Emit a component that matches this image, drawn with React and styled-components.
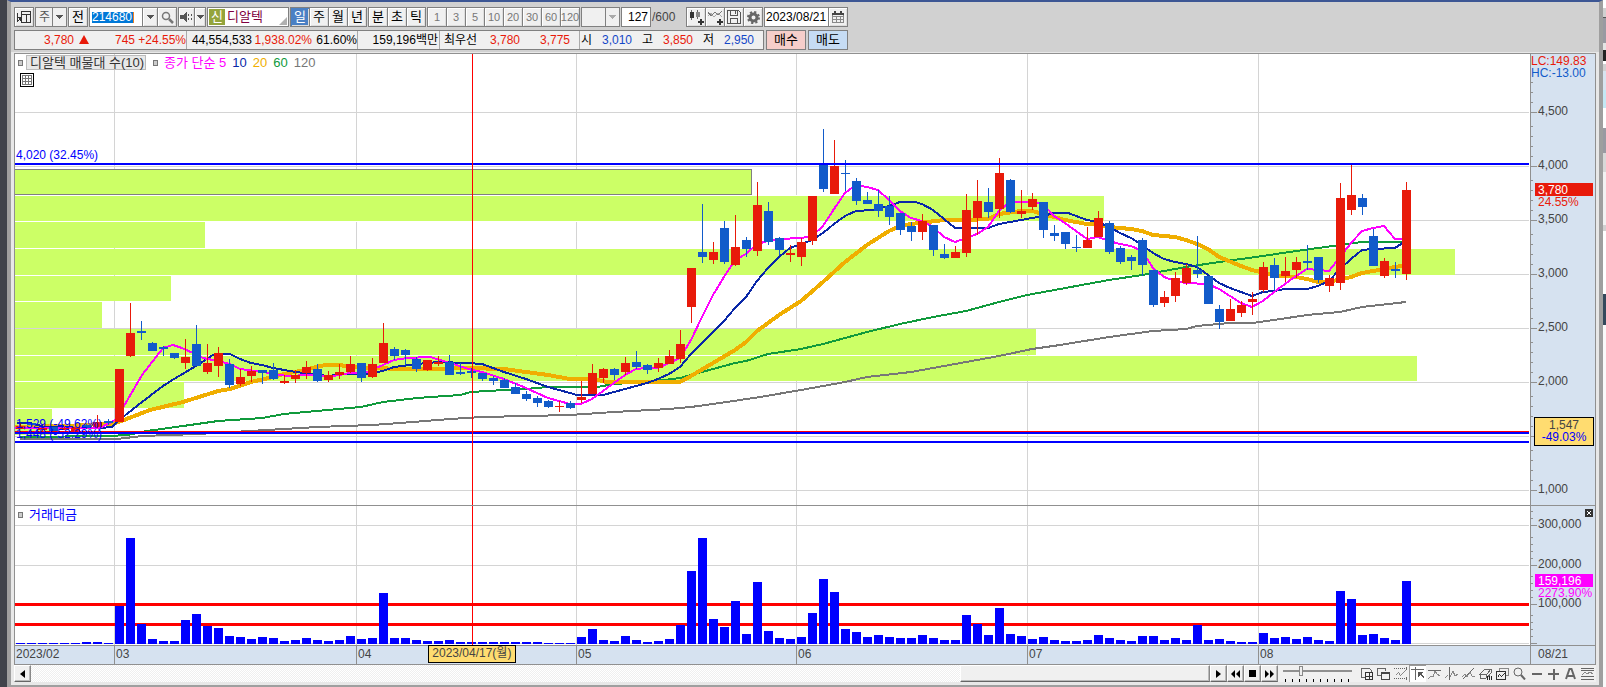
import React, { useState } from "react";
import styled, { createGlobalStyle, css } from "styled-components";

const RED = "#e81a0a";
const BLUE = "#125bca";
const LINE = "#808080";
const GRID = "#d4d4d4";
const AXIS_BG = "#d6e2f0";
const FONT = '"Liberation Sans", "Noto Sans CJK KR", sans-serif';

const GlobalStyle = createGlobalStyle`
  * {
    box-sizing: border-box;
  }
  body {
    margin: 0;
    font-family: ${FONT};
    font-size: 12px;
    line-height: 14px;
    color: #000;
  }
  button, input, select {
    font: inherit;
    color: inherit;
    margin: 0;
    padding: 0;
    border: 0;
    border-radius: 0;
    background: none;
    min-width: 0;
  }
`;

// ---------- data ----------

// [up/down, body top, body bottom, high, low], one per trading day
const candles = [
  ["u", 426, 429, 423, 429], ["d", 423, 425, 423, 426], ["u", 428, 430, 427, 431], ["d", 427, 432, 427, 433],
  ["u", 428, 430, 426, 430], ["u", 427, 431, 426, 431], ["d", 425, 428, 424, 429], ["u", 422, 427, 415, 428],
  ["d", 421, 423, 419, 425], ["u", 369, 422, 369, 422], ["u", 333, 356, 303, 357], ["d", 331, 333, 321, 340],
  ["d", 343, 351, 342, 351], ["d", 347, 349, 346, 356], ["d", 353, 358, 353, 359], ["u", 357, 363, 339, 369],
  ["d", 344, 366, 325, 366], ["u", 363, 372, 344, 374], ["u", 353, 366, 347, 377], ["d", 364, 385, 359, 388],
  ["u", 377, 384, 369, 386], ["u", 371, 376, 366, 382], ["d", 370, 373, 370, 384], ["d", 370, 379, 363, 380],
  ["u", 381, 383, 375, 384], ["u", 375, 379, 370, 383], ["u", 367, 373, 361, 379], ["d", 369, 381, 364, 382],
  ["u", 375, 380, 371, 382], ["u", 372, 375, 364, 379], ["u", 364, 372, 356, 373], ["d", 363, 378, 363, 382],
  ["u", 364, 377, 358, 378], ["u", 343, 363, 323, 363], ["d", 349, 356, 347, 360], ["d", 350, 355, 349, 365],
  ["d", 359, 369, 357, 372], ["u", 360, 370, 360, 371], ["u", 362, 364, 356, 366], ["d", 362, 375, 355, 375],
  ["d", 372, 374, 363, 375], ["d", 371, 373, 368, 378], ["d", 373, 379, 373, 381], ["d", 378, 381, 376, 385],
  ["d", 380, 388, 378, 388], ["d", 387, 394, 383, 394], ["d", 394, 399, 391, 401], ["d", 398, 403, 396, 407],
  ["d", 401, 407, 400, 408], ["u", 406, 407, 401, 412], ["d", 403, 408, 401, 409], ["u", 397, 400, 381, 403],
  ["u", 373, 394, 364, 394], ["u", 369, 378, 368, 383], ["d", 369, 375, 368, 380], ["u", 363, 372, 357, 375],
  ["d", 362, 367, 351, 369], ["d", 365, 370, 364, 374], ["u", 363, 368, 358, 372], ["u", 356, 364, 350, 364],
  ["u", 344, 359, 330, 363], ["u", 268, 307, 268, 323], ["d", 252, 257, 204, 263], ["u", 252, 260, 242, 264],
  ["d", 228, 262, 221, 264], ["u", 247, 265, 215, 266], ["d", 240, 249, 237, 257], ["u", 205, 251, 182, 256],
  ["d", 211, 242, 202, 245], ["d", 238, 250, 237, 255], ["u", 253, 255, 245, 262], ["u", 242, 257, 238, 266],
  ["u", 196, 241, 196, 245], ["d", 164, 189, 129, 192], ["u", 166, 194, 140, 194], ["d", 173, 174, 160, 191],
  ["d", 181, 201, 178, 205], ["d", 200, 204, 192, 204], ["d", 204, 211, 190, 217], ["d", 206, 217, 196, 225],
  ["d", 213, 230, 213, 235], ["d", 226, 232, 222, 241], ["u", 221, 232, 214, 240], ["d", 225, 250, 225, 256],
  ["d", 254, 258, 244, 259], ["u", 252, 258, 246, 258], ["u", 210, 253, 194, 257], ["u", 201, 218, 180, 235],
  ["d", 202, 212, 188, 218], ["u", 173, 209, 158, 218], ["d", 180, 212, 179, 213], ["u", 211, 214, 190, 218],
  ["u", 199, 207, 193, 210], ["d", 202, 230, 202, 238], ["d", 233, 236, 225, 241], ["d", 232, 244, 232, 249],
  ["d", 247, 248, 235, 252], ["u", 240, 248, 227, 248], ["u", 218, 237, 211, 237], ["d", 223, 252, 221, 254],
  ["d", 248, 262, 246, 264], ["d", 257, 261, 255, 270], ["d", 240, 265, 238, 276], ["d", 270, 305, 270, 307],
  ["u", 297, 303, 291, 307], ["u", 278, 296, 272, 302], ["u", 268, 283, 264, 285], ["d", 270, 274, 236, 278],
  ["d", 276, 304, 276, 304], ["d", 309, 322, 305, 329], ["u", 309, 321, 299, 321], ["u", 305, 313, 301, 317],
  ["u", 299, 302, 292, 315], ["u", 267, 290, 262, 292], ["d", 265, 278, 258, 291], ["u", 271, 276, 257, 282],
  ["u", 262, 270, 257, 278], ["d", 261, 263, 245, 270], ["d", 257, 280, 257, 283], ["u", 278, 286, 275, 292],
  ["u", 198, 283, 183, 290], ["u", 195, 210, 164, 215], ["d", 198, 207, 194, 215], ["d", 236, 266, 229, 266],
  ["u", 261, 276, 258, 278], ["d", 269, 271, 262, 278], ["u", 190, 274, 182, 280],
];

const volumes = [
  1, 1, 1, 1, 1, 1, 2, 2, 1, 38, 106, 20, 5, 3, 3, 24, 30, 18, 16, 8, 7, 5, 7, 6, 3, 4, 6, 4, 3, 4, 8, 5, 6, 51, 6, 6,
  4, 3, 3, 4, 2, 2, 2, 2, 2, 2, 2, 2, 1, 1, 1, 7, 15, 4, 3, 8, 4, 2, 3, 5, 19, 73, 106, 25, 17, 43, 10, 62, 13, 6, 5,
  7, 31, 65, 52, 15, 12, 7, 9, 7, 6, 6, 9, 6, 4, 4, 29, 20, 9, 36, 10, 8, 5, 7, 4, 3, 3, 4, 9, 6, 4, 3, 8, 8, 4, 6, 4,
  19, 4, 5, 3, 2, 2, 11, 6, 7, 5, 7, 4, 3, 53, 45, 9, 10, 6, 4, 63,
];

const averages = [
  {
    color: "#777",
    width: 2,
    points:
      "20,439 117,439 142,436 197,434 250,431 284,429 317,427 372,425 400,423 450,419 482,417 570,415 614,412 669,409 691,407 720,403 760,397 801,390 845,382 867,377 911,372 944,366 999,356 1032,349 1060,345 1109,337 1153,331 1186,329 1197,326 1230,323 1252,323 1274,320 1307,315 1340,312 1362,307 1406,302",
  },
  {
    color: "#109a3c",
    width: 2,
    points:
      "20,437 110,436 127,435 147,431 183,426 218,421 262,418 284,414 317,411 361,407 383,402 417,398 460,395 471,392 504,390 526,389 548,387 597,387 614,384 647,382 680,378 702,372 735,363 746,361 768,354 801,349 823,344 867,332 900,324 933,317 966,311 999,302 1027,295 1060,289 1109,280 1142,275 1186,267 1219,262 1263,256 1296,251 1318,248 1340,245 1362,242 1406,242",
  },
  {
    color: "#f0ae00",
    width: 4,
    points:
      "15,427 67,426 100,424 113,424 124,420 150,410 183,402 218,391 230,389 251,382 273,377 284,374 300,371 325,365 339,365 353,367 400,369 433,369 467,368 504,369 526,372 548,375 570,379 593,379 607,382 680,382 691,376 713,363 735,350 746,342 757,331 779,315 801,301 823,282 845,262 867,245 889,231 900,226 911,224 944,220 966,220 988,219 999,214 1021,211 1032,211 1043,214 1065,220 1087,224 1098,224 1109,227 1131,229 1142,231 1153,235 1175,237 1186,240 1197,244 1208,249 1219,257 1241,266 1252,270 1273,275 1296,277 1307,279 1318,282 1333,281 1351,277 1362,273 1384,269 1406,265",
  },
  {
    color: "#0a28a8",
    width: 2,
    points:
      "17,423 30,423 45,427 100,428 112,427 123,417 142,402 163,386 174,379 196,366 213,355 223,354 230,354 240,359 251,363 262,365 273,368 290,371 310,374 328,376 343,374 367,374 383,371 394,367 417,364 438,362 467,363 482,364 504,372 526,379 548,387 570,393 577,395 603,395 614,392 625,389 636,386 647,383 658,379 669,374 680,367 691,354 702,343 713,332 724,321 735,308 746,297 757,281 768,268 779,257 790,248 801,244 812,240 823,233 834,224 845,216 856,211 873,210 889,206 900,202 915,202 922,204 933,210 944,219 955,228 988,228 999,224 1010,222 1032,218 1043,216 1054,213 1068,213 1087,220 1098,222 1109,227 1120,233 1131,238 1142,245 1153,253 1164,259 1175,262 1186,264 1197,267 1208,275 1219,283 1230,288 1241,292 1252,296 1263,292 1274,291 1285,289 1307,289 1318,286 1329,281 1340,269 1351,259 1362,250 1373,249 1395,248 1404,242",
  },
  {
    color: "#ff00ff",
    width: 2,
    points:
      "15,428 100,428 115,420 124,406 142,375 163,348 173,345 182,348 193,353 203,358 213,360 230,364 240,369 263,372 287,376 310,375 333,376 350,373 367,372 383,365 394,360 407,358 430,357 450,363 472,370 482,372 504,379 526,388 548,398 570,404 581,404 592,399 603,391 614,383 625,375 636,369 647,368 658,368 669,363 680,358 691,340 702,317 713,295 724,277 735,260 746,254 757,244 768,241 779,239 801,238 812,236 823,226 834,209 845,193 856,185 867,187 878,190 889,200 900,211 911,218 922,221 933,227 944,237 955,242 966,238 977,234 988,227 999,211 1010,202 1032,202 1043,204 1054,216 1065,223 1076,231 1087,239 1098,237 1109,241 1120,244 1131,246 1142,251 1153,268 1164,277 1175,281 1186,283 1208,284 1219,289 1230,296 1241,303 1252,307 1263,301 1274,292 1285,284 1296,276 1307,269 1318,270 1329,271 1340,257 1351,243 1362,231 1373,228 1384,226 1395,239 1406,239",
  },
];

// volume-at-price bands: [top, bottom, right edge]
const bands = [
  [196, 221, 1104], [222, 248, 205], [249, 275, 1455], [276, 301, 171], [302, 328, 102],
  [329, 355, 1036], [356, 381, 1417], [382, 408, 184], [409, 435, 52],
];

const months = [
  { label: "2023/02", size: 99 },
  { label: "03", size: 242 },
  { label: "04", size: 220 },
  { label: "05", size: 220 },
  { label: "06", size: 231 },
  { label: "07", size: 231 },
  { label: "08", size: 272 },
];
const monthLines = [114, 356, 576, 796, 1027, 1258];

const priceTicks = [
  [112, "4,500"], [166, "4,000"], [220, "3,500"], [274, "3,000"],
  [328, "2,500"], [382, "2,000"], [436, ""], [490, "1,000"],
];
const volumeTicks = [[525, "300,000"], [565, "200,000"], [604, "100,000"], [643, ""]];

const barX = (i) => 16 + i * 11;

// ---------- frame ----------

const Desktop = styled.div`
  display: flex;
  min-height: 100vh;
  background: #40434b;
  padding-left: 7px;
`;

const Neighbour = styled.div`
  width: 3px;
  background: linear-gradient(
    #fff 8px, #d0d0d0 8px 17px, #555 17px 18px, #9a9aa2 18px 43px, #e4e4e4 43px 50px, #222 50px 61px, #fff 61px 64px,
    #d0d0d0 64px 71px, #d8e4f0 71px 90px, #c4e8f4 90px 108px, #fff 108px 128px, #9a9aa2 128px 153px,
    #d8d8d8 153px 172px, #f2f2f2 172px 225px, #d0d0d0 225px 231px, #fff 231px 294px, #34495c 294px 325px, #fafafa 325px
  );
`;

const Window = styled.main`
  flex: 1;
  min-width: 0;
  display: flex;
  flex-direction: column;
  border: 4px solid #9f9f9f;
  border-top: 2px solid #3c5694;
  border-bottom-width: 3px;
  background: #e8e8e8;
`;

const Header = styled.header`
  display: flex;
  flex-direction: column;
  gap: 3px;
  height: 50px;
  padding: 5px 3px 0;
  margin-bottom: 1px;
  background: #d1d1d1;
  white-space: nowrap;
`;

// ---------- toolbar ----------

const Toolbar = styled.div`
  display: flex;
  gap: 1px;
  height: 20px;
`;

const Group = styled.div`
  position: relative;
  display: flex;
  flex: none;
  width: ${(p) => p.$width}px;
  border: 1px solid ${LINE};
  background: ${(p) => (p.$white ? "#fff" : "#f0f0f0")};
  > * + * {
    border-left: 1px solid ${LINE};
  }
`;

const ToolButton = styled.button`
  flex: ${(p) => (p.$width ? `0 0 ${p.$width}px` : 1)};
  display: flex;
  align-items: center;
  justify-content: center;
  background: ${(p) => (p.$active ? "#4a80c4" : "#f0f0f0")};
  color: ${(p) => (p.$active ? "#fff" : "#000")};
  box-shadow: inset 1px 1px ${(p) => (p.$active ? "#4a80c4" : "#fff")}, inset -1px -1px #ddd;
  font-size: ${(p) => (p.$small ? 11 : 13)}px;
  &:disabled {
    color: #777;
  }
`;

const Field = styled.input`
  flex: 1;
  padding: 0 2px;
  background: #fff;
  outline: none;
  text-align: ${(p) => p.$align || "left"};
`;

const DateField = styled(Field)`
  padding: 0 1px;
`;

const CodeField = styled(Field)`
  color: #fff;
  background: linear-gradient(#f08020, #f08020) 43px 4px / 1px 11px no-repeat,
    linear-gradient(#0078d7, #0078d7) 2px 4px / 41px 11px no-repeat, #fff;
`;

const Picker = styled.select`
  flex: 1;
  appearance: none;
  outline: none;
  padding-left: 3px;
  color: #555;
`;

const Arrow = styled.span`
  position: absolute;
  top: 0;
  right: 0;
  bottom: 0;
  width: ${(p) => p.$width}px;
  display: flex;
  align-items: center;
  justify-content: center;
  border-left: 1px solid ${LINE};
  pointer-events: none;
`;

const NameBox = styled(Group)`
  align-items: center;
  gap: 2px;
  padding-left: 1px;
  color: #800040;
  font-size: 13px;
  > * + * {
    border: 0;
  }
  &::after {
    content: "";
    position: absolute;
    right: 1px;
    bottom: 1px;
    border: 4px solid #b0b0b0;
    border-top-color: transparent;
    border-left-color: transparent;
  }
`;

const NewBadge = styled.span`
  width: 16px;
  height: 16px;
  line-height: 16px;
  text-align: center;
  background: #94a43c;
  color: #fff;
`;

const CountLabel = styled.label`
  width: 33px;
  line-height: 20px;
  color: #444;
`;

// ---------- quote row ----------

const QuoteRow = styled.div`
  display: flex;
  gap: 2px;
  height: 20px;
`;

const Quotes = styled.div`
  display: flex;
  width: 750px;
  border: 1px solid ${LINE};
  background: #f0f0f0;
`;

const QuoteCell = styled.div`
  display: flex;
  width: ${(p) => p.$width}px;
  line-height: 18px;
  & + & {
    border-left: 1px solid #aaa;
  }
`;

const tones = { up: "#e81a0a", down: "#1448c8", flat: "#000" };

const Value = styled.span`
  width: ${(p) => p.$width}px;
  text-align: right;
  color: ${(p) => tones[p.$tone || "flat"]};
`;

const OrderButton = styled.button`
  width: 40px;
  border: 1px solid ${LINE};
  background: ${(p) => (p.$buy ? "#f6ceca" : "#c6dcf4")};
  font-size: 13px;
`;

// ---------- chart ----------

const Frame = styled.section`
  flex: 1;
  display: flex;
  flex-direction: column;
  margin: 0 3px;
  border: 1px solid #909090;
  background: #fff;
`;

const Pane = styled.div`
  display: flex;
  height: ${(p) => p.$height}px;
  & + & {
    border-top: 1px solid #909090;
  }
`;

const Plot = styled.div`
  position: relative;
  flex: 1;
  min-width: 0;
  > svg {
    display: block;
    width: 100%;
    height: 100%;
    shape-rendering: crispEdges;
  }
`;

const Scale = styled.div`
  position: relative;
  width: 65px;
  border-left: 1px solid #909090;
  background: ${AXIS_BG};
  svg {
    display: block;
  }
`;

const ScaleText = styled.text`
  font-family: ${FONT};
  font-size: 12px;
  fill: ${(p) => p.$color || "#444"};
`;

const Legend = styled.div`
  position: absolute;
  top: 1px;
  left: 3px;
  display: flex;
  align-items: center;
  height: 15px;
  font-size: 13px;
  white-space: nowrap;
`;

const Marker = styled.i`
  width: 5px;
  height: 6px;
  border: 1px solid #777;
  background: #ccc;
`;

const LegendTitle = styled.span`
  margin: 0 7px 0 3px;
  padding: 0 2px 0 3px;
  width: 120px;
  border: 1px solid #bbb;
  background: #e8e8e8;
  color: #333;
  line-height: 13px;
`;

const LegendItem = styled.span`
  margin-left: ${(p) => p.$gap || 6}px;
  color: ${(p) => p.$color};
`;

const TableButton = styled.button`
  position: absolute;
  top: 19px;
  left: 5px;
  width: 14px;
  height: 14px;
`;

const LineLabel = styled.span`
  position: absolute;
  left: 1px;
  color: #0000ff;
  white-space: nowrap;
`;

const CloseButton = styled.button`
  position: absolute;
  top: 3px;
  right: 2px;
  width: 8px;
  height: 8px;
  background: #333;
  svg {
    display: block;
  }
`;

const TimeAxis = styled.div`
  display: flex;
  height: 19px;
  border-top: 1px solid #909090;
  background: ${AXIS_BG};
  color: #444;
  line-height: 16px;
`;

const Months = styled.div`
  position: relative;
  flex: 1;
  display: grid;
  grid-template-columns: ${months.map((m) => `${m.size}fr`).join(" ")};
`;

const Month = styled.span`
  padding-left: 1px;
  & + & {
    border-left: 1px solid #909090;
  }
`;

const CursorDate = styled.span`
  position: absolute;
  top: -1px;
  left: 27.25%;
  width: 88px;
  height: 18px;
  border: 1px solid #000;
  background: #ffdc70;
  text-align: center;
  line-height: 15px;
`;

const LastDate = styled.span`
  width: 65px;
  padding-left: 7px;
  border-left: 1px solid #909090;
`;

// ---------- bottom bar ----------

const BottomBar = styled.footer`
  display: flex;
  height: 17px;
  margin: 0 3px 3px;
  background: #f0f0f0;
`;

const raised = css`
  background: #f0f0f0;
  border: 1px solid #fff;
  border-right-color: #888;
  border-bottom-color: #666;
  box-shadow: inset -1px -1px #bbb;
`;

const StepButton = styled.button`
  ${raised}
  flex: none;
  width: 17px;
  display: flex;
  align-items: center;
  justify-content: center;
`;

const Track = styled.div`
  flex: 1;
  display: flex;
  justify-content: flex-end;
  background: repeating-conic-gradient(#efefef 0 25%, #fff 0 50%) 0 0 / 2px 2px;
`;

const Thumb = styled.div`
  ${raised}
  width: 21.2%;
`;

const SpeedBox = styled.label`
  flex: none;
  display: flex;
  flex-direction: column;
  justify-content: space-between;
  width: 70px;
  margin: 0 5px;
`;

const Speed = styled.input`
  appearance: none;
  width: 69px;
  height: 11px;
  &::-webkit-slider-runnable-track {
    height: 2px;
    background: #909090;
  }
  &::-webkit-slider-thumb {
    appearance: none;
    width: 4px;
    height: 10px;
    margin-top: -4px;
    border: 1px solid #888;
    background: #eee;
  }
`;

const SpeedTicks = styled.span`
  height: 3px;
  margin: 0 1px;
  background: repeating-linear-gradient(90deg, transparent 0 1px, #000 1px 2px, transparent 2px 7px);
`;

const Tools = styled.div`
  flex: none;
  display: flex;
`;

const ToolIcon = styled.button`
  width: 17px;
  display: flex;
  align-items: center;
  justify-content: center;
  background: ${(p) => (p.$active ? "#fff" : "none")};
  box-shadow: ${(p) => (p.$active ? "inset 1px 1px #999" : "none")};
`;

// ---------- icons ----------

function Glyph({ size = 13, box = 13, color = "#555", smooth, children }) {
  return (
    <svg
      width={size}
      height={size}
      viewBox={`0 0 ${box} ${box}`}
      fill="none"
      stroke={color}
      shapeRendering={smooth ? "auto" : "crispEdges"}
      aria-hidden="true"
    >
      {children}
    </svg>
  );
}

function Down({ color = "#555" }) {
  return (
    <svg width="7" height="4" shapeRendering="crispEdges" aria-hidden="true">
      <path d="M0 0h7L3.500 4z" fill={color} />
    </svg>
  );
}

const tools = [
  ["격자 추가", <><path d="M11.500 5V3.500l-2-2h-8v9H5" /><path d="M5.500 5.500h7v7h-7zM9 5.500v7M5.500 9h7" stroke="#333" /></>],
  ["겹치기", <><path d="M4 8.500H.500v-7h8V4" /><path d="M4.500 5.500h8v7h-8zM4.500 6.500h8" stroke="#444" /></>],
  ["영역", <><path d="M0 1.500h13M0 11.500h13" strokeDasharray="1 1" /><path d="M1.500 8.500l3-3 2 3 5-5" stroke="#888" /><path d="M12.500 0v3M12.500 10v3" /></>],
  ["커서", <><path d="M0 2.500h13M4.500 0v13" /><path d="M7 5h5l-2 2 3 3-1 1-3-3-2 2z" fill="#555" stroke="none" /></>, true],
  ["수평선", <><path d="M0 3.500h13" /><path d="M0 12l3-3 2 1 2-6 2 3 3 2" stroke="#888" /></>],
  ["수직선", <><path d="M4.500 0v13" /><path d="M0 11l3-3M5 10l3-6 2 5 3-2" stroke="#888" /></>],
  ["추세선", <><path d="M1 12L12 1" /><path d="M0 10l3-3 2 3 3-5 2 4 3 1" stroke="#888" /></>],
  ["지우개", <><path d="M1 7l5-5h6L8 7zM1 7v4h6l1-4M8 11l4-5V2" /><path d="M8.500 9v4M10.500 9v4M12.500 9v4" stroke="#222" /></>],
  ["화면 복사", <><path d="M3.500 4V1.500h9v7H10" stroke="#888" /><path d="M.500 4.500h9v8h-9zM1.500 10.500l2-3 2 2 3-3" stroke="#333" /></>],
  ["찾기", <><circle cx="5" cy="5" r="4" /><path d="M8 8l4 4.500" strokeWidth="2" /></>],
  ["축소", <path d="M1.500 7h10" strokeWidth="2" />],
  ["확대", <path d="M1 7h11M6.500 1.500v11" strokeWidth="2" />],
  ["글자", <path d="M2 12L5.500 2h2L11 12M3.500 9h6" strokeWidth="2" />],
  ["목록", <><path d="M0 1.500h13M0 3.500h13M0 9.500h13M0 12h13" /><path d="M1 8l3-3 2 2 3-2 3 2" stroke="#888" /></>],
];

// ---------- parts ----------

function TopToolbar() {
  const [period, setPeriod] = useState("일");

  return (
    <Toolbar>
      <Group $width={20}>
        <ToolButton aria-label="화면 열기">
          <Glyph size={14} box={14}>
            <path d="M4.500 1.500h9v11h-9zM4.500 4.500h9M9.500 4v8" stroke="#333" />
            <path d="M0 3v9M0 12l4-4M1 7h3v4z" stroke="#333" fill="#333" />
          </Glyph>
        </ToolButton>
      </Group>
      <Group $width={32}>
        <Picker aria-label="종목 구분">
          <option>주</option>
        </Picker>
        <Arrow $width={14}><Down /></Arrow>
      </Group>
      <Group $width={20}>
        <ToolButton>전</ToolButton>
      </Group>
      <Group $width={88}>
        <CodeField aria-label="종목코드" defaultValue="214680" />
        <ToolButton $width={15} aria-label="코드 목록"><Down /></ToolButton>
        <ToolButton $width={19} aria-label="종목 찾기">
          <Glyph color="#777" smooth>
            <circle cx="5" cy="5" r="3.500" strokeWidth="1.500" />
            <path d="M8 8l4 4" strokeWidth="2.500" />
          </Glyph>
        </ToolButton>
      </Group>
      <Group $width={28}>
        <ToolButton aria-label="소리">
          <Glyph>
            <path d="M0 4h3l4-4v12L3 8H0z" fill="#555" stroke="none" />
            <path d="M8.500 3v6M11.500 3v6" strokeDasharray="2 2" />
          </Glyph>
        </ToolButton>
        <ToolButton $width={11} aria-label="소리 설정"><Down /></ToolButton>
      </Group>
      <NameBox $width={82} $white>
        <NewBadge>신</NewBadge>
        <span>디알텍</span>
      </NameBox>
      <Group $width={77}>
        {["일", "주", "월", "년"].map((p) => (
          <ToolButton key={p} $active={p === period} onClick={() => setPeriod(p)}>{p}</ToolButton>
        ))}
      </Group>
      <Group $width={58}>
        {["분", "초", "틱"].map((p) => (
          <ToolButton key={p} $active={p === period} onClick={() => setPeriod(p)}>{p}</ToolButton>
        ))}
      </Group>
      <Group $width={153}>
        {[1, 3, 5, 10, 20, 30, 60, 120].map((n) => (
          <ToolButton key={n} $small disabled>{n}</ToolButton>
        ))}
      </Group>
      <Group $width={39}>
        <Picker aria-label="간격" disabled>
          <option> </option>
        </Picker>
        <Arrow $width={14}><Down color="#aaa" /></Arrow>
      </Group>
      <Group $width={30} $white>
        <Field id="count" $align="right" defaultValue="127" />
      </Group>
      <CountLabel htmlFor="count">/600</CountLabel>
      <Group $width={77}>
        <ToolButton aria-label="차트 유형">
          <Glyph size={15} box={15}>
            <path d="M2.500 0v10M8.500 0v9" stroke="#666" />
            <path d="M1 2h4v6H1z" fill="#333" stroke="none" />
            <path d="M7 2h4v5H7z" fill="#888" stroke="none" />
            <path d="M9 11.500h6M12 9v6" stroke="#333" strokeWidth="2" />
          </Glyph>
        </ToolButton>
        <ToolButton aria-label="지표 추가">
          <Glyph size={15} box={15}>
            <path d="M0 6l3-3 3 4 4-4 4 4" stroke="#aaa" />
            <path d="M0 2l3 4 4-4 3 3 4-4" stroke="#777" />
            <path d="M9 11.500h6M12 9v6" stroke="#333" strokeWidth="2" />
          </Glyph>
        </ToolButton>
        <ToolButton aria-label="저장">
          <Glyph size={14} box={14}>
            <path d="M.500 .500h11l2 2v11H.500zM3.500 .500v5h7v-5M3.500 13.500v-5h7v5M8.500 1v3" />
          </Glyph>
        </ToolButton>
        <ToolButton aria-label="설정">
          <Glyph smooth color="#666">
            <circle cx="6.500" cy="6.500" r="3.500" strokeWidth="3" />
            <circle cx="6.500" cy="6.500" r="5.500" strokeWidth="2" strokeDasharray="2.200 2.120" />
          </Glyph>
        </ToolButton>
      </Group>
      <Group $width={84}>
        <DateField aria-label="기준일" defaultValue="2023/08/21" />
        <ToolButton $width={19} aria-label="달력">
          <Glyph>
            <path d="M.500 2.500h11v9H.500zM.500 5.500h11M4 5v6M8 5v6M.500 8.500h11" stroke="#888" />
            <path d="M0 3h12M3 0v2M9 0v2" stroke="#444" strokeWidth="2" />
          </Glyph>
        </ToolButton>
      </Group>
    </Toolbar>
  );
}

function QuoteBar() {
  return (
    <QuoteRow>
      <Quotes>
        <QuoteCell $width={171}>
          <Value $width={59} $tone="up">3,780</Value>
          <Value $width={15} $tone="up">
            <svg width="10" height="9" aria-label="상승"><path d="M5 0L10 9H0z" fill={RED} /></svg>
          </Value>
          <Value $width={46} $tone="up">745</Value>
          <Value $width={51} $tone="up">+24.55%</Value>
        </QuoteCell>
        <QuoteCell $width={171}>
          <Value $width={65}>44,554,533</Value>
          <Value $width={60} $tone="up">1,938.02%</Value>
          <Value $width={45}>61.60%</Value>
        </QuoteCell>
        <QuoteCell $width={82}>
          <Value $width={80}>159,196백만</Value>
        </QuoteCell>
        <QuoteCell $width={140}>
          <Value $width={37}>최우선</Value>
          <Value $width={43} $tone="up">3,780</Value>
          <Value $width={50} $tone="up">3,775</Value>
        </QuoteCell>
        <QuoteCell $width={184}>
          <Value $width={12}>시</Value>
          <Value $width={40} $tone="down">3,010</Value>
          <Value $width={21}>고</Value>
          <Value $width={40} $tone="up">3,850</Value>
          <Value $width={21}>저</Value>
          <Value $width={40} $tone="down">2,950</Value>
        </QuoteCell>
      </Quotes>
      <OrderButton $buy>매수</OrderButton>
      <OrderButton>매도</OrderButton>
    </QuoteRow>
  );
}

function Ticks({ ticks, step, top }) {
  return ticks.map(([y, label]) => (
    <g key={y}>
      <rect x="0" y={y} width="6" height="1" fill="#909090" />
      {[1, 2, 3, 4].map((k) => y - k * step > top && (
        <rect key={k} x="0" y={y - k * step} width="2" height="1" fill="#909090" />
      ))}
      <ScaleText x="7" y={y + 3}>{label}</ScaleText>
    </g>
  ));
}

function PriceChart() {
  return (
    <Pane $height={451}>
      <Plot>
        <svg viewBox="15 54 1515 451" preserveAspectRatio="none">
          {priceTicks.map(([y]) => <rect key={y} x="15" y={y} width="1514" height="1" fill={GRID} />)}
          {monthLines.map((x) => <rect key={x} x={x} y="54" width="1" height="451" fill={GRID} />)}
          <rect x="15" y="195" width="1089" height="27" fill="#fff" />
          <rect x="14.500" y="169.500" width="737" height="25" fill="#ccff66" stroke={LINE} />
          {bands.map(([top, bottom, right]) => (
            <rect key={top} x="15" y={top} width={right - 15} height={bottom - top} fill="#ccff66" />
          ))}
          {averages.map((a) => (
            <polyline key={a.color} points={a.points} fill="none" stroke={a.color} strokeWidth={a.width} />
          ))}
          {candles.map(([dir, top, bottom, high, low], i) => (
            <g key={i} fill={dir === "u" ? RED : BLUE}>
              <rect x={barX(i) + 4} y={high} width="1" height={low - high} />
              <rect x={barX(i)} y={top} width="9" height={bottom - top} />
            </g>
          ))}
          <rect x="15" y="163" width="1514" height="2" fill="#00f" />
          <rect x="15" y="431" width="1514" height="1" fill="#f00" />
          <rect x="15" y="432" width="1514" height="2" fill="#00f" />
          <rect x="15" y="441" width="1514" height="2" fill="#00f" />
          <rect x="472" y="54" width="1" height="451" fill="#f00" />
        </svg>
        <Legend>
          <Marker />
          <LegendTitle>디알텍 매물대 수(10)</LegendTitle>
          <Marker />
          <LegendItem $color="#ff00ff">종가 단순 5</LegendItem>
          <LegendItem $color="#0a28a8">10</LegendItem>
          <LegendItem $color="#f0ae00">20</LegendItem>
          <LegendItem $color="#109a3c">60</LegendItem>
          <LegendItem $color="#777">120</LegendItem>
        </Legend>
        <TableButton aria-label="표로 보기">
          <svg width="14" height="14" fill="none" shapeRendering="crispEdges">
            <rect x=".5" y=".5" width="13" height="13" stroke="#000" fill="#fff" />
            <path d="M2.500 2.500h9v9h-9zM5.500 2v10M8.500 2v10M2 5.500h10M2 8.500h10" stroke="#777" />
          </svg>
        </TableButton>
        <LineLabel style={{ top: 94 }}>4,020 (32.45%)</LineLabel>
        <LineLabel style={{ top: 363 }}>1,529 (-49.62%)</LineLabel>
        <LineLabel style={{ top: 373 }}>1,448 (-52.29%)</LineLabel>
      </Plot>
      <Scale>
        <svg width="64" height="451" viewBox="0 54 64 451" shapeRendering="crispEdges">
          <Ticks ticks={priceTicks} step={10} top={80} />
          <ScaleText x="0" y="65" $color={RED}>LC:149.83</ScaleText>
          <ScaleText x="0" y="77" $color={BLUE}>HC:-13.00</ScaleText>
          <rect x="4" y="183" width="58" height="13" fill={RED} />
          <ScaleText x="7" y="194" $color="#fff">3,780</ScaleText>
          <ScaleText x="7" y="206" $color={RED}>24.55%</ScaleText>
          <rect x="3.500" y="417.500" width="59" height="28" fill="#ffdc70" stroke="#000" />
          <ScaleText x="33" y="429" textAnchor="middle">1,547</ScaleText>
          <ScaleText x="33" y="441" textAnchor="middle" $color="#00f">-49.03%</ScaleText>
        </svg>
      </Scale>
    </Pane>
  );
}

function VolumeChart() {
  return (
    <Pane $height={140}>
      <Plot>
        <svg viewBox="15 506 1515 139" preserveAspectRatio="none">
          {volumeTicks.map(([y]) => <rect key={y} x="15" y={y} width="1514" height="1" fill={GRID} />)}
          {monthLines.map((x) => <rect key={x} x={x} y="506" width="1" height="139" fill={GRID} />)}
          <rect x="15" y="603" width="1514" height="3" fill="#f00" />
          <rect x="15" y="623" width="1514" height="3" fill="#f00" />
          {volumes.map((h, i) => (
            <rect key={i} x={barX(i)} y={644 - h} width="9" height={h} fill="#00f" />
          ))}
          <rect x="472" y="506" width="1" height="139" fill="#f00" />
        </svg>
        <Legend>
          <Marker />
          <LegendItem $color="#00f">거래대금</LegendItem>
        </Legend>
      </Plot>
      <Scale>
        <svg width="64" height="139" viewBox="0 506 64 139" shapeRendering="crispEdges">
          <Ticks ticks={volumeTicks} step={7} top={507} />
          <rect x="4" y="574" width="58" height="13" fill="#f0f" />
          <ScaleText x="7" y="585" $color="#fff">159,196</ScaleText>
          <ScaleText x="7" y="597" $color="#f0f">2273.90%</ScaleText>
        </svg>
        <CloseButton aria-label="닫기">
          <svg width="8" height="8"><path d="M2 2l4 4M6 2l-4 4" stroke="#fff" /></svg>
        </CloseButton>
      </Scale>
    </Pane>
  );
}

function PlaybackBar() {
  return (
    <BottomBar>
      <StepButton aria-label="왼쪽으로">
        <svg width="5" height="8"><path d="M5 0v8L0 4z" /></svg>
      </StepButton>
      <Track><Thumb /></Track>
      <StepButton aria-label="재생">
        <svg width="5" height="8"><path d="M0 0v8l5-4z" /></svg>
      </StepButton>
      <StepButton aria-label="뒤로">
        <svg width="9" height="8"><path d="M4 0v8L0 4zM9 0v8L5 4z" /></svg>
      </StepButton>
      <StepButton aria-label="정지">
        <svg width="7" height="7"><path d="M0 0h7v7H0z" /></svg>
      </StepButton>
      <StepButton aria-label="앞으로">
        <svg width="9" height="8"><path d="M0 0v8l4-4zM5 0v8l4-4z" /></svg>
      </StepButton>
      <SpeedBox>
        <Speed type="range" min="0" max="10" step="0.5" defaultValue="2.5" aria-label="재생 속도" />
        <SpeedTicks />
      </SpeedBox>
      <Tools>
        {tools.map(([name, drawing, active]) => (
          <ToolIcon key={name} aria-label={name} $active={active}>
            <Glyph color="#666" smooth={name === "글자" || name === "찾기"}>{drawing}</Glyph>
          </ToolIcon>
        ))}
      </Tools>
    </BottomBar>
  );
}

export default function App() {
  return (
    <Desktop>
      <GlobalStyle />
      <Window>
        <Header>
          <TopToolbar />
          <QuoteBar />
        </Header>
        <Frame>
          <PriceChart />
          <VolumeChart />
          <TimeAxis>
            <Months>
              {months.map((m) => <Month key={m.label}>{m.label}</Month>)}
              <CursorDate>2023/04/17(월)</CursorDate>
            </Months>
            <LastDate>08/21</LastDate>
          </TimeAxis>
        </Frame>
        <PlaybackBar />
      </Window>
      <Neighbour />
    </Desktop>
  );
}
